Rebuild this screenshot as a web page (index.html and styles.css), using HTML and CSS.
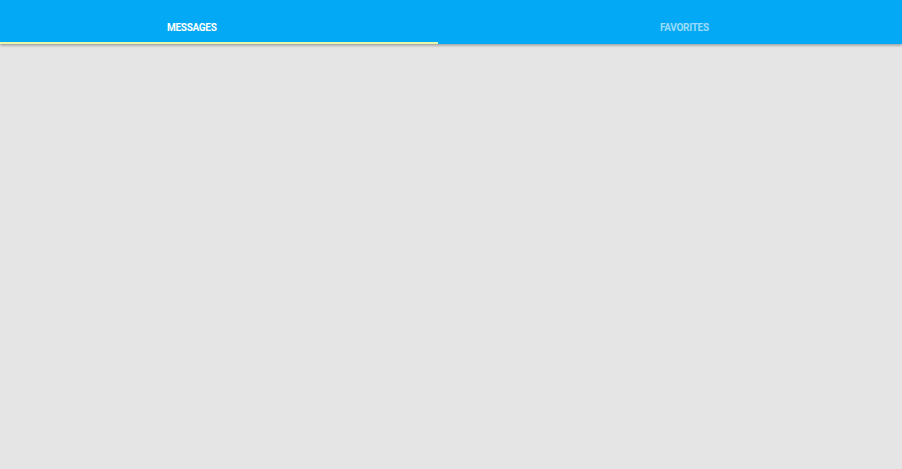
FILE: index.html
```html
<!DOCTYPE html>
<html>
<head>
<meta charset="utf-8">
<link rel="stylesheet" href="styles.css">
</head>
<body>
<div class="tabbar">
  <div class="tab tab-left active"><span class="label">MESSAGES</span></div>
  <div class="tab tab-right"><span class="label">FAVORITES</span></div>
</div>
<main class="content"></main>
</body>
</html>
```
FILE: styles.css
```css
html, body {
  margin: 0;
  padding: 0;
  height: 100%;
  background: #e5e5e5;
  font-family: Roboto, "Liberation Sans", sans-serif;
}
.tabbar {
  display: flex;
  height: 44px;
  background: #03a9f4;
  box-shadow: 0 1px 3px rgba(0,0,0,0.25), 0 2px 2px rgba(0,0,0,0.1);
  position: relative;
  z-index: 1;
}
.tab {
  display: flex;
  align-items: flex-start;
  box-sizing: border-box;
  height: 44px;
  padding-top: 22px;
  font-size: 10px;
  letter-spacing: -0.3px;
  line-height: 12px;
  font-weight: 700;
  color: rgba(255,255,255,0.6);
}
.tab-left {
  width: 438px;
  padding-left: 167px;
}
.tab-right {
  flex: 1;
  padding-left: 222px;
}
.tab.active {
  color: #ffffff;
  border-bottom: 2px solid #e6f7a5;
}
.content {
  height: calc(100% - 44px);
}
```
